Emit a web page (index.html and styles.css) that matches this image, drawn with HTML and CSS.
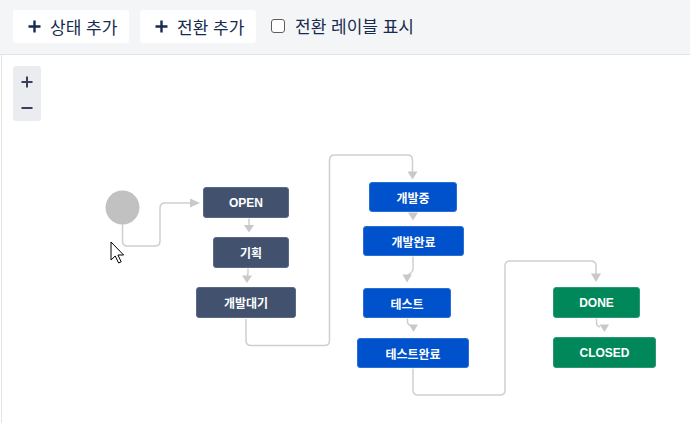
FILE: index.html
```html
<!DOCTYPE html>
<html lang="ko">
<head>
  <meta charset="UTF-8" />
  <meta name="viewport" content="width=device-width, initial-scale=1" />
  <title>워크플로 편집</title>
  <link rel="stylesheet" href="styles.css">
</head>
<body>
  <div class="toolbar">
    <button class="toolBtn">
      <svg class="plusIcon" width="13" height="13" viewBox="0 0 13 13"><path d="M6.5 0.5V12.5M0.5 6.5H12.5" /></svg>
      상태 추가
    </button>
    <button class="toolBtn">
      <svg class="plusIcon" width="13" height="13" viewBox="0 0 13 13"><path d="M6.5 0.5V12.5M0.5 6.5H12.5" /></svg>
      전환 추가
    </button>
    <label class="labelToggle">
      <input type="checkbox" class="checkBox" />
      전환 레이블 표시
    </label>
  </div>

  <div class="canvas">
    <div class="zoomBox">
      <button class="zoomBtn" title="확대">
        <svg width="12" height="12" viewBox="0 0 12 12"><path d="M6 0.5V11.5M0.5 6H11.5" /></svg>
      </button>
      <button class="zoomBtn" title="축소">
        <svg width="12" height="12" viewBox="0 0 12 12"><path d="M0.5 6H11.5" /></svg>
      </button>
    </div>

    <!-- 전환 선 (페이지 좌표) -->
    <svg class="links" width="688" height="367" viewBox="2 56 688 367">
      <circle class="startNode" cx="122.5" cy="208.5" r="17" />
      <g class="line">
        <path d="M122.5 225V242Q122.5 247 127.5 247H155Q160 247 160 242V209Q160 204 165 204H192" />
        <path d="M249 219.5V226" />
        <path d="M248 269.5V274Q248 276 247 277" />
        <path d="M246 320V341.5Q246 346.5 251 346.5H324.5Q329.5 346.5 329.5 341.5V161Q329.5 156 334.5 156H407.5Q412.5 156 412.5 161V174" />
        <path d="M413 257.5V270Q413 273 408 276" />
        <path d="M407.5 319.5V323Q407.5 326 412 327" />
        <path d="M413 369.5V391Q413 396 418 396H500Q505 396 505 391V267Q505 262 510 262H591Q596 262 596 267V276" />
        <path d="M596.5 319.5V324Q596.5 327 600 328" />
      </g>
      <g class="arrow">
        <polygon points="190,199.5 200,204 190,208.5" />
        <polygon points="244,226 254,226 249,233.5" />
        <polygon points="242,276.5 252,276.5 247,284" />
        <polygon points="407.5,172.5 417.5,172.5 412.5,180.5" />
        <polygon points="408,213.5 418,213.5 413,221.5" />
        <polygon points="402.5,275.5 412,275.5 407,283.5" />
        <polygon points="409,325.5 418,325.5 413.5,333" />
        <polygon points="591,274.5 601,274.5 596,283" />
        <polygon points="599.5,325.5 609,325.5 604.5,333" />
      </g>
    </svg>

    <div class="node todo" style="left:201px;top:132px;width:86px">OPEN</div>
    <div class="node todo" style="left:211px;top:182px;width:76px">기획</div>
    <div class="node todo" style="left:194px;top:232px;width:100px">개발대기</div>
    <div class="node doing" style="left:367px;top:127px;width:88px">개발중</div>
    <div class="node doing" style="left:361px;top:171px;width:101px">개발완료</div>
    <div class="node doing" style="left:361px;top:233px;width:88px">테스트</div>
    <div class="node doing" style="left:355px;top:283px;width:112px">테스트완료</div>
    <div class="node done" style="left:551px;top:232px;width:87px">DONE</div>
    <div class="node done" style="left:551px;top:282px;width:103px">CLOSED</div>

    <svg class="cursor" width="15" height="23" viewBox="0 0 15 23">
      <path d="M1 1V19L5.2 15L8.6 22L11.2 20.8L7.9 14H13.6Z" />
    </svg>
  </div>
</body>
</html>
```

FILE: styles.css
```css
html, body {
  margin: 0;
  height: 100%;
}

body {
  font-family: 'Noto Sans CJK KR', 'Noto Sans', sans-serif;
  color: #172b4d;
  background-color: #ffffff;
  display: flex;
  flex-direction: column;
  overflow: hidden;
}

.toolbar {
  display: flex;
  align-items: flex-start;
  height: 55px;
  padding: 10px 13px 0;
  box-sizing: border-box;
  background-color: #f4f5f7;
  border-bottom: 1px solid #e1e3e8;
}

.toolBtn {
  display: flex;
  align-items: center;
  gap: 9px;
  width: 116px;
  height: 33px;
  padding: 0 0 0 15px;
  margin-right: 11px;
  border: none;
  border-radius: 3px;
  background-color: #ffffff;
  color: #172b4d;
  font-family: inherit;
  font-size: 17px;
  line-height: 1;
  cursor: pointer;
}

.plusIcon path {
  stroke: #172b4d;
  stroke-width: 2.4;
  fill: none;
}

.labelToggle {
  display: flex;
  align-items: center;
  gap: 10px;
  margin: 5px 0 0 4px;
  font-size: 17px;
  line-height: 22px;
  color: #172b4d;
}

.checkBox {
  appearance: none;
  width: 14px;
  height: 14px;
  margin: 0;
  border: 1px solid #5e5e5e;
  border-radius: 3px;
  background-color: #ffffff;
}

.canvas {
  position: relative;
  flex: 1;
  margin-left: 1px;
  border-left: 1px solid #e4e4e4;
}

.zoomBox {
  display: flex;
  flex-direction: column;
  width: 28px;
  margin: 11px 0 0 11px;
  padding: 3px 0 0;
  border-radius: 3px;
  background-color: #ebecf0;
}

.zoomBtn {
  display: flex;
  align-items: center;
  justify-content: center;
  height: 26px;
  padding: 0;
  border: none;
  background: none;
  cursor: pointer;
}

.zoomBtn path {
  stroke: #3b3f5c;
  stroke-width: 2;
  fill: none;
}

.links {
  position: absolute;
  left: 0;
  top: 0;
}

.startNode {
  fill: #c1c1c1;
}

.line path {
  fill: none;
  stroke: #cfcfcf;
  stroke-width: 1.5;
}

.arrow polygon {
  fill: #c9c9c9;
}

.node {
  position: absolute;
  height: 31px;
  box-sizing: border-box;
  display: flex;
  align-items: center;
  justify-content: center;
  border-radius: 3px;
  color: #ffffff;
  font-family: 'Liberation Sans', 'Noto Sans CJK KR', sans-serif;
  font-size: 12px;
  font-weight: bold;
}

.todo {
  background-color: #42526e;
  border: 1px solid #5a6a86;
}

.doing {
  height: 30px;
  background-color: #0052cc;
  border: 1px solid #2a6fd6;
}

.done {
  background-color: #00875a;
  border: 1px solid #2a9a74;
}

.cursor {
  position: absolute;
  left: 108px;
  top: 186px;
}

.cursor path {
  fill: #ffffff;
  stroke: #000000;
  stroke-width: 1;
  stroke-linejoin: miter;
}
```
